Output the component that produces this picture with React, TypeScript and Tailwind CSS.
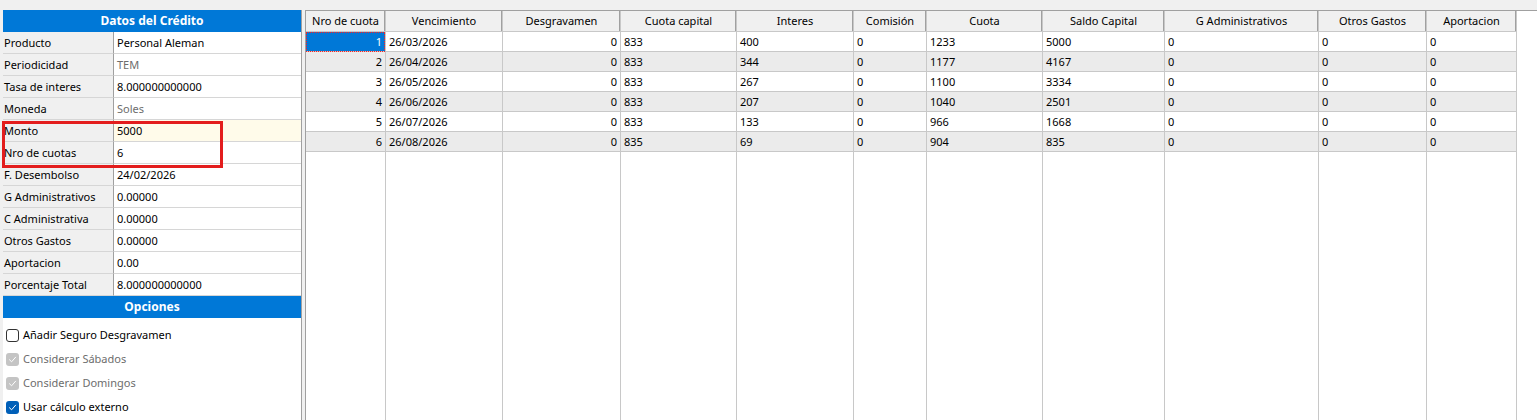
import React from "react";

const DATOS = [
  { label: "Producto", value: "Personal Aleman" },
  { label: "Periodicidad", value: "TEM", muted: true },
  { label: "Tasa de interes", value: "8.000000000000" },
  { label: "Moneda", value: "Soles", muted: true },
  { label: "Monto", value: "5000", highlight: true },
  { label: "Nro de cuotas", value: "6" },
  { label: "F. Desembolso", value: "24/02/2026" },
  { label: "G Administrativos", value: "0.00000" },
  { label: "C Administrativa", value: "0.00000" },
  { label: "Otros Gastos", value: "0.00000" },
  { label: "Aportacion", value: "0.00" },
  { label: "Porcentaje Total", value: "8.000000000000" },
];

const OPCIONES = [
  { label: "Añadir Seguro Desgravamen", state: "off" },
  { label: "Considerar Sábados", state: "disabled" },
  { label: "Considerar Domingos", state: "disabled" },
  { label: "Usar cálculo externo", state: "on" },
];

type Col = { title: string; width: string; right?: boolean; values: string[] };

const COLUMNS: Col[] = [
  { title: "Nro de cuota", width: "w-[80px]", right: true, values: ["1", "2", "3", "4", "5", "6"] },
  {
    title: "Vencimiento",
    width: "w-[117px]",
    values: ["26/03/2026", "26/04/2026", "26/05/2026", "26/06/2026", "26/07/2026", "26/08/2026"],
  },
  { title: "Desgravamen", width: "w-[118px]", right: true, values: ["0", "0", "0", "0", "0", "0"] },
  { title: "Cuota capital", width: "w-[116px]", values: ["833", "833", "833", "833", "833", "835"] },
  { title: "Interes", width: "w-[117px]", values: ["400", "344", "267", "207", "133", "69"] },
  { title: "Comisión", width: "w-[73px]", values: ["0", "0", "0", "0", "0", "0"] },
  { title: "Cuota", width: "w-[116px]", values: ["1233", "1177", "1100", "1040", "966", "904"] },
  { title: "Saldo Capital", width: "w-[122px]", values: ["5000", "4167", "3334", "2501", "1668", "835"] },
  { title: "G Administrativos", width: "w-[154px]", values: ["0", "0", "0", "0", "0", "0"] },
  { title: "Otros Gastos", width: "w-[108px]", values: ["0", "0", "0", "0", "0", "0"] },
  { title: "Aportacion", width: "w-[90px]", values: ["0", "0", "0", "0", "0", "0"] },
];

function Check({ state }: { state: string }) {
  if (state === "off") {
    return <span className="w-[13px] h-[13px] rounded-[3px] border border-[#333] bg-white shrink-0" />;
  }
  const bg = state === "on" ? "bg-[#005fb8]" : "bg-[#c4c4c4]";
  return (
    <span className={`w-[13px] h-[13px] rounded-[3px] ${bg} shrink-0 flex items-center justify-center`}>
      <svg width="9" height="9" viewBox="0 0 9 9" fill="none">
        <path d="M1.5 4.8 L3.6 6.8 L7.6 2.2" stroke="white" strokeWidth="1" strokeLinecap="round" strokeLinejoin="round" />
      </svg>
    </span>
  );
}

function SectionHeader({ children }: { children: React.ReactNode }) {
  return (
    <div className="h-[22px] bg-[#0078d7] text-white font-bold text-[12px] flex items-center justify-center">
      {children}
    </div>
  );
}

export default function App() {
  return (
    <div
      className="h-[420px] overflow-hidden bg-[#f0f0f0] flex pt-[10px] pl-[3px] gap-[3px] text-[11px] text-black"
      style={{ fontFamily: '"Noto Sans", "Segoe UI", sans-serif' }}
    >
      {/* Left panel */}
      <div className="w-[299px] shrink-0 bg-white border-r border-[#a0a0a0] relative">
        <SectionHeader>Datos del Crédito</SectionHeader>
        {DATOS.map((row) => (
          <div key={row.label} className="grid grid-cols-[111px_1fr] h-[22px]">
            <div className="bg-[#f0f0f0] border-r border-b border-[#a0a0a0] border-b-[#d6d6d6] flex items-center pl-[1px] pt-[1px]">
              {row.label}
            </div>
            <div
              className={`border-b border-[#d6d6d6] flex items-center pl-[3px] pt-[1px] ${
                row.highlight ? "bg-[#fffbea]" : ""
              } ${row.muted ? "text-[#6d6d6d]" : ""}`}
            >
              {row.value}
            </div>
          </div>
        ))}
        <SectionHeader>Opciones</SectionHeader>
        <div className="pt-[5px]">
          {OPCIONES.map((o) => (
            <div key={o.label} className="h-[24px] flex items-center gap-[4px] pl-[3px]">
              <Check state={o.state} />
              <span className={o.state === "disabled" ? "text-[#6d6d6d]" : ""}>{o.label}</span>
            </div>
          ))}
        </div>
        {/* annotation box */}
        <div className="absolute left-[-1px] top-[111px] w-[221px] h-[47px] border-[3px] border-[#e31d1d]" />
      </div>

      {/* Table */}
      <div className="flex-1 bg-white border-l border-t border-[#a0a0a0] flex">
        {COLUMNS.map((col, ci) => (
          <div key={col.title} className={`${col.width} shrink-0 flex flex-col border-r border-[#c8c8c8]`}>
            <div className="h-[21px] bg-[#f0f0f0] border-b border-[#c8c8c8] flex items-center justify-center pt-[1px] shadow-[inset_-1px_0_0_#a0a0a0]">
              {col.title}
            </div>
            {col.values.map((v, ri) => {
              const selected = ci === 0 && ri === 0;
              const zebra = ri % 2 === 1 ? "bg-[#ebebeb]" : "bg-white";
              return (
                <div
                  key={ri}
                  className={`h-[20px] border-b border-[#c8c8c8] flex items-center px-[3px] pt-[1px] ${
                    col.right ? "justify-end" : ""
                  } ${
                    selected
                      ? "relative z-10 bg-[#0078d7] text-white outline-1 outline-dotted outline-[#ff2020] -outline-offset-1"
                      : zebra
                  }`}
                >
                  {v}
                </div>
              );
            })}
            <div className="flex-1" />
          </div>
        ))}
      </div>
    </div>
  );
}
